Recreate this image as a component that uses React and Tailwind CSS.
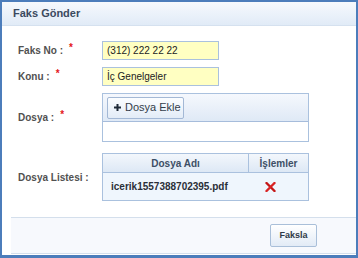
import React from 'react';

const Star = () => <span className="ml-[6px] relative -top-[3px] text-[10px] font-bold text-[#e4161b]">*</span>;

const FieldLabel = ({ children, required }) => (
  <div className="text-[10px] font-bold text-[#515151] whitespace-nowrap">
    {children}
    {required && <Star />}
  </div>
);

const DeleteIcon = () => (
  <svg width="11" height="10" viewBox="0 0 11 10">
    <path d="M1.5 1 L9.5 9" stroke="#c41616" strokeWidth="2.4" strokeLinecap="round" />
    <path d="M9.5 1 L1.5 9" stroke="#d92323" strokeWidth="2.4" strokeLinecap="round" />
  </svg>
);

const PlusIcon = () => (
  <svg width="7" height="7" viewBox="0 0 7 7">
    <path d="M3.5 0 V7 M0 3.5 H7" stroke="#1f2a38" strokeWidth="2" />
  </svg>
);

export default function App() {
  return (
    <div className="w-[358px] h-[258px] flex flex-col bg-white border-t-2 border-l-2 border-r-2 border-b-[3px] border-[#4c7dbb] font-['Liberation_Sans',Arial,sans-serif]">
      {/* Header */}
      <div className="h-[24px] shrink-0 flex items-center pl-[11px] bg-gradient-to-b from-[#f6f9fd] to-[#e1ebf7] border-b border-[#d5e1ef]">
        <span className="text-[11px] font-bold text-[#3b4a5f]">Faks Gönder</span>
      </div>

      {/* Form */}
      <div className="flex-1 pl-[16px] pt-[15px]">
        <div className="grid grid-cols-[84px_207px] items-center">
          <FieldLabel required>Faks No :</FieldLabel>
          <div className="w-[117px] h-[19px] flex items-center px-[4px] bg-[#ffffc2] border border-[#aac1de] text-[10px] text-[#222]">
            (312) 222 22 22
          </div>

          <div className="col-span-2 h-[7px]" />

          <FieldLabel required>Konu :</FieldLabel>
          <div className="w-[117px] h-[19px] flex items-center px-[4px] bg-[#ffffc2] border border-[#aac1de] text-[10px] text-[#222]">
            İç Genelgeler
          </div>

          <div className="col-span-2 h-[7px]" />

          <FieldLabel required>Dosya :</FieldLabel>
          <div className="h-[49px] flex flex-col border border-[#aac1de]">
            <div className="h-[28px] flex items-center pl-[4px] bg-gradient-to-b from-[#f5f8fd] to-[#dfe9f6] border-b border-[#a6bcdb]">
              <button className="h-[22px] w-[77px] flex items-center gap-[4px] pl-[6px] rounded-[2px] border border-[#a3b8d5] bg-gradient-to-b from-[#fbfdff] to-[#e3ecf7] text-[11px] text-[#333d4a]">
                <PlusIcon />
                Dosya Ekle
              </button>
            </div>
            <div className="flex-1 bg-white" />
          </div>

          <div className="col-span-2 h-[11px]" />

          <FieldLabel>Dosya Listesi :</FieldLabel>
          <div className="h-[48px] flex flex-col border border-[#aac1de]">
            <div className="h-[19px] flex bg-gradient-to-b from-[#f3f7fc] to-[#dde8f5] border-b border-[#aac1de] text-[10px] font-bold text-[#3d4f66]">
              <div className="w-[146px] flex items-center justify-center border-r border-[#aac1de]">Dosya Adı</div>
              <div className="flex-1 flex items-center justify-center">İşlemler</div>
            </div>
            <div className="flex-1 flex bg-[#eff6fd]">
              <div className="w-[146px] flex items-center pl-[8px] text-[10px] font-bold text-[#2a2f38]">
                icerik1557388702395.pdf
              </div>
              <div className="flex-1 flex items-center pl-[16px]">
                <DeleteIcon />
              </div>
            </div>
          </div>
        </div>
      </div>

      {/* Footer */}
      <div className="h-[37px] shrink-0 ml-[9px] mb-[1px] flex items-center justify-end pr-[39px] bg-[#f7f9fd] border-t border-b border-[#d4dfec]">
        <button className="w-[47px] h-[23px] flex items-center justify-center rounded-[2px] border border-[#a9bfd9] bg-gradient-to-b from-[#ffffff] to-[#e2ebf6] text-[9px] font-bold text-[#2f3a48]">
          Faksla
        </button>
      </div>
    </div>
  );
}
